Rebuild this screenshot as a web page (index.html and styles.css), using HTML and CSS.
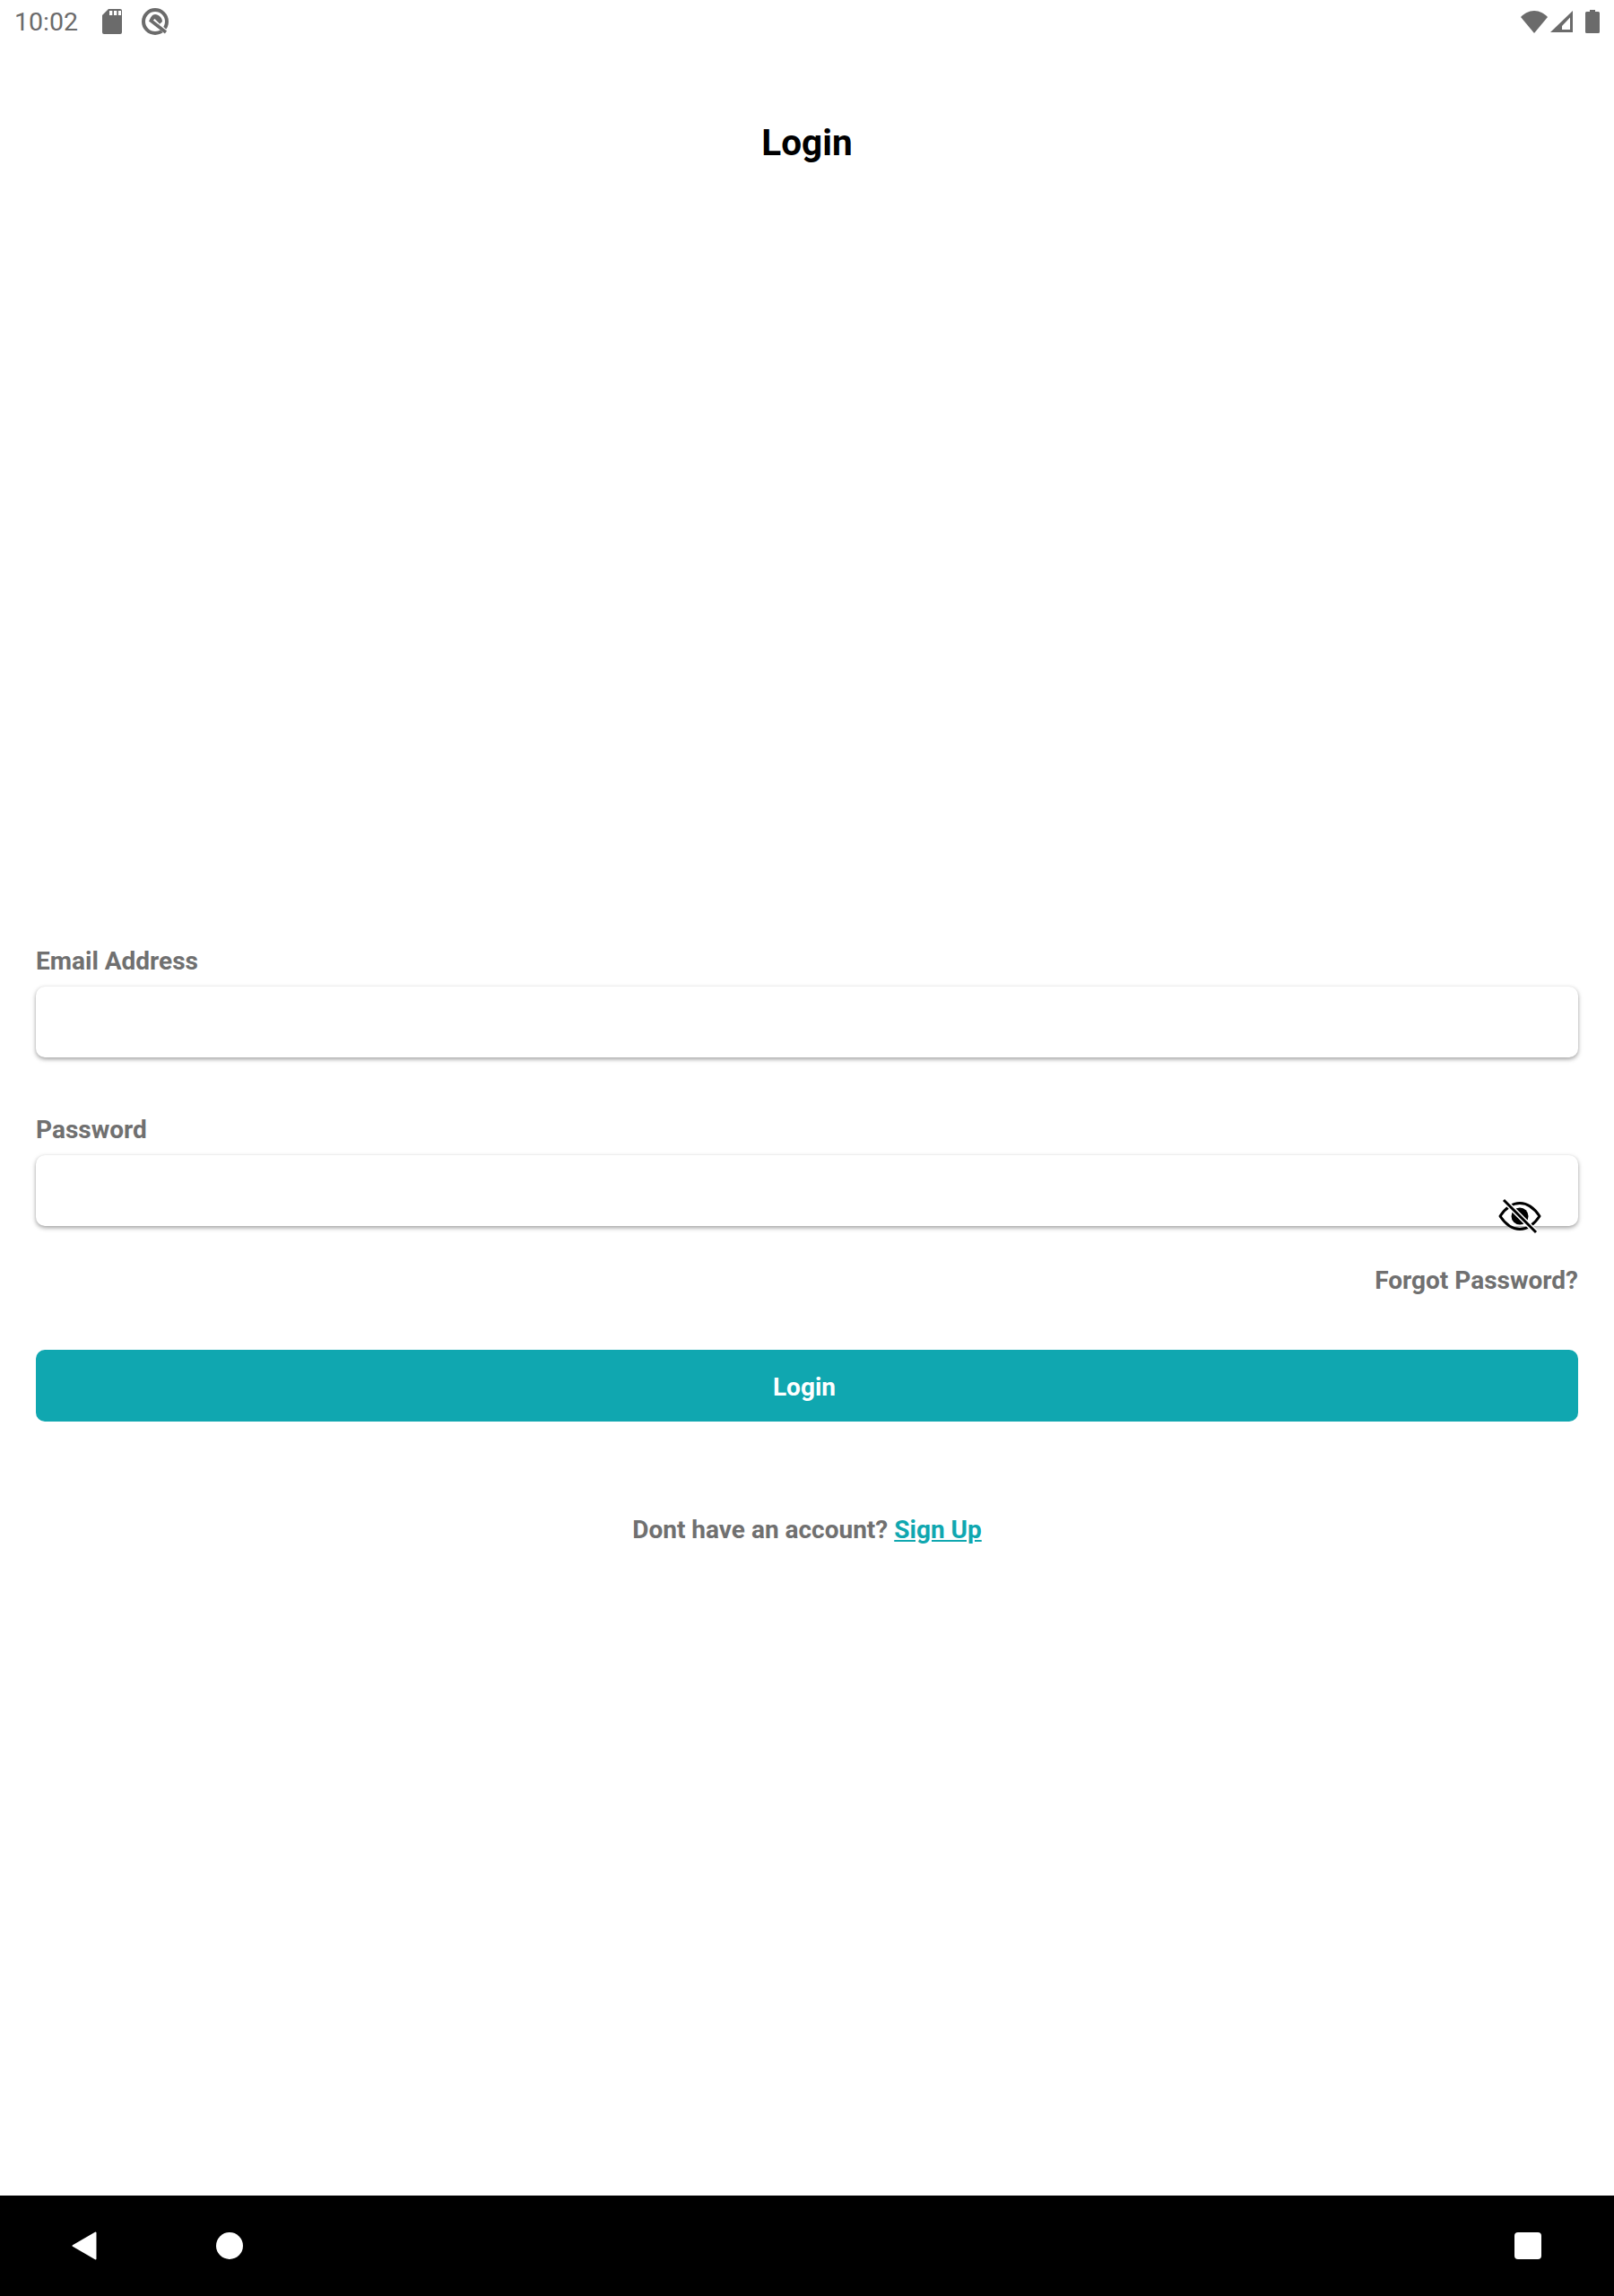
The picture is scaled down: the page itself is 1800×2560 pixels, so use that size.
FILE: index.html
```html
<!DOCTYPE html>
<html lang="en">
<head>
    <meta charset="UTF-8">
    <meta name="viewport" content="width=device-width, initial-scale=1.0">
    <title>Login</title>
    <link rel="stylesheet" href="styles.css">
</head>
<body>
    <div class="screen">
        <div class="status-bar">
            <div class="status-left">
                <span class="clock">10:02</span>
                <svg class="sd-icon" viewBox="0 0 22 28" width="22" height="28"><path fill="#6b6b6b" d="M0 7 L7 0 H20 a2 2 0 0 1 2 2 V26 a2 2 0 0 1 -2 2 H2 a2 2 0 0 1 -2 -2 Z"/><path fill="#fff" d="M8 2h3.300v5h-3.300zM13 2h3.300v5h-3.300zM18 2h3v5h-3z"/></svg>
                <svg class="q-icon" viewBox="0 0 30 30" width="30" height="30"><circle cx="15" cy="15" r="13" fill="none" stroke="#6b6b6b" stroke-width="4"/><path fill="#6b6b6b" d="M15 7 C19 7 23 11 23 15 L17 21 L9 13 C10 10 12 7 15 7 Z"/><path fill="#fff" d="M14.500 12 L20 17.500 L17.500 20 L12 14.500 Z"/><path stroke="#fff" stroke-width="5" d="M19 19 L29 29"/><path stroke="#6b6b6b" stroke-width="3.500" d="M9 13 L27 27"/></svg>
            </div>
            <div class="status-right">
                <svg class="wifi-icon" viewBox="0 0 30 25" width="30" height="25"><path fill="#6b6b6b" d="M15 25 L0 7 C4 3 9 0 15 0 S26 3 30 7 Z"/></svg>
                <svg class="signal-icon" viewBox="0 0 25 24" width="25" height="24"><path fill="#6b6b6b" d="M25 0 V24 H0 Z"/><path fill="#fff" d="M22 7.500 V21 H13 V17 Z"/></svg>
                <svg viewBox="0 0 16 26" width="16" height="26"><path fill="#6b6b6b" d="M5 0h6v2h3.500a1.500 1.500 0 0 1 1.500 1.500v21a1.500 1.500 0 0 1-1.500 1.500H1.500A1.500 1.500 0 0 1 0 24.500v-21A1.500 1.500 0 0 1 1.500 2H5z"/></svg>
            </div>
        </div>

        <h1 class="page-title">Login</h1>

        <form class="login-form">
            <label class="field-label" for="email">Email Address</label>
            <div class="field-box">
                <input class="field-input" id="email" type="text">
            </div>

            <label class="field-label password-label" for="password">Password</label>
            <div class="field-box">
                <input class="field-input" id="password" type="password">
                <svg class="eye-icon" viewBox="0 0 48 40" width="48" height="40">
                    <path fill="none" stroke="#000" stroke-width="3" stroke-linejoin="round" d="M2 20 C8 11 15 5.500 24 5.500 S40 11 46 20 C40 29 33 34.500 24 34.500 S8 29 2 20 Z"/>
                    <circle cx="24" cy="20" r="9.500" fill="#000"/>
                    <path stroke="#fff" stroke-width="6" d="M6 2 L42 38"/>
                    <path stroke="#000" stroke-width="3" d="M6 2 L42 38"/>
                </svg>
            </div>

            <a class="forgot-link">Forgot Password?</a>

            <button class="login-button" type="button">Login</button>

            <p class="signup-line">Dont have an account? <a class="signup-link">Sign Up</a></p>
        </form>

        <div class="nav-bar">
            <div class="nav-left">
                <svg viewBox="0 0 28 32" width="28" height="32"><path fill="#fff" stroke="#fff" stroke-width="2" stroke-linejoin="round" d="M1.500 16 L26.500 1.500 V30.500 Z"/></svg>
                <span class="nav-home"></span>
            </div>
            <span class="nav-recent"></span>
        </div>
    </div>
</body>
</html>
```

FILE: styles.css
```css
body {
    margin: 0;
    background: #fff;
    font-family: 'Roboto', sans-serif;
}

.screen {
    width: 1800px;
    height: 2560px;
    display: flex;
    flex-direction: column;
    overflow: hidden;
}

.status-bar {
    height: 48px;
    display: flex;
    justify-content: space-between;
    align-items: center;
    padding: 0 16px;
}

.status-left {
    display: flex;
    align-items: center;
}

.status-right {
    display: flex;
    align-items: center;
}

.clock {
    font-size: 28.5px;
    color: #6b6b6b;
    width: 98px;
}

.sd-icon {
    margin-right: 22px;
}

.wifi-icon {
    margin-right: 3px;
}

.signal-icon {
    margin-right: 14px;
}

.page-title {
    margin: 87px 0 0;
    height: 48px;
    font-size: 40.5px;
    line-height: 48px;
    font-weight: 700;
    text-align: center;
    color: #000;
}

.login-form {
    flex: 1;
    padding: 871px 40px 0;
    display: flex;
    flex-direction: column;
}

.field-label {
    font-size: 28px;
    line-height: 36px;
    font-weight: 700;
    color: #707070;
    margin-bottom: 10px;
}

.password-label {
    margin-top: 63px;
}

.field-box {
    position: relative;
    height: 79px;
    background: #fff;
    border-radius: 10px;
    box-shadow: 0 2px 5px rgba(0, 0, 0, 0.38), 0 0 2px rgba(0, 0, 0, 0.04);
}

.field-input {
    width: 100%;
    height: 100%;
    box-sizing: border-box;
    border: none;
    background: transparent;
    outline: none;
}

.eye-icon {
    position: absolute;
    right: 41px;
    top: 48px;
}

.forgot-link {
    align-self: flex-end;
    margin-top: 43px;
    font-size: 28px;
    line-height: 36px;
    font-weight: 700;
    color: #707070;
}

.login-button {
    margin-top: 59px;
    height: 80px;
    padding: 2px 6px 0 0;
    border: none;
    border-radius: 10px;
    background: #10a7b0;
    color: #fff;
    font-family: inherit;
    font-size: 28px;
    font-weight: 700;
}

.signup-line {
    margin: 103px 0 0;
    font-size: 28px;
    line-height: 36px;
    font-weight: 700;
    text-align: center;
    color: #707070;
}

.signup-link {
    color: #10a7b0;
    text-decoration: underline;
}

.nav-bar {
    height: 112px;
    flex-shrink: 0;
    background: #000;
    display: flex;
    justify-content: space-between;
    align-items: center;
    padding: 0 81px 0 80px;
}

.nav-left {
    display: flex;
    align-items: center;
    gap: 133px;
}

.nav-home {
    width: 30px;
    height: 30px;
    border-radius: 50%;
    background: #fff;
}

.nav-recent {
    width: 30px;
    height: 30px;
    border-radius: 4px;
    background: #fff;
}
```
